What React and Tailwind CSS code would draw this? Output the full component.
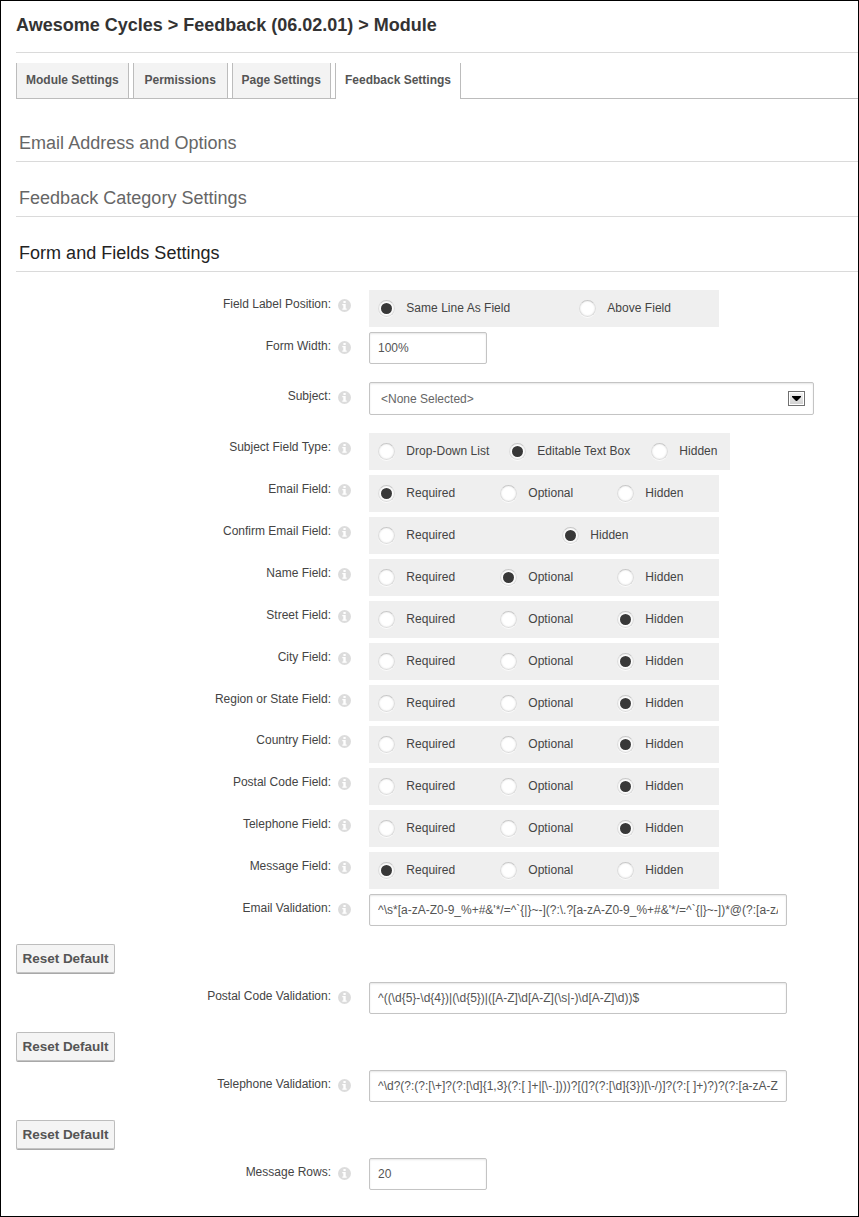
const TABS = [
  { label: 'Module Settings', cls: 'w-[113px] mr-1 pl-[9px]' },
  { label: 'Permissions', cls: 'w-[95px] mr-1 pl-[10.5px]' },
  { label: 'Page Settings', cls: 'w-[99px] mr-1 pl-[8.5px]' },
];

const three = (selected) => [
  { label: 'Required', cls: 'w-[122px]', on: selected === 0 },
  { label: 'Optional', cls: 'w-[117px]', on: selected === 1 },
  { label: 'Hidden', cls: '', on: selected === 2 },
];

const ROWS = [
  {
    label: 'Field Label Position:',
    h: 'h-[42px]',
    options: [
      { label: 'Same Line As Field', cls: 'w-[201px]', on: true },
      { label: 'Above Field', cls: '', on: false },
    ],
  },
  { label: 'Form Width:', h: 'h-[50px]', value: '100%', w: 'w-[118px]' },
  { label: 'Subject:', h: 'h-[51px]', select: '<None Selected>' },
  {
    label: 'Subject Field Type:',
    h: 'h-[42px]',
    panel: 'w-[361px]',
    options: [
      { label: 'Drop-Down List', cls: 'w-[131px]', on: false },
      { label: 'Editable Text Box', cls: 'w-[142px]', on: true },
      { label: 'Hidden', cls: '', on: false },
    ],
  },
  { label: 'Email Field:', h: 'h-[42px]', options: three(0) },
  {
    label: 'Confirm Email Field:',
    h: 'h-[42px]',
    options: [
      { label: 'Required', cls: 'w-[184px]', on: false },
      { label: 'Hidden', cls: '', on: true },
    ],
  },
  { label: 'Name Field:', h: 'h-[42px]', options: three(1) },
  { label: 'Street Field:', h: 'h-[42px]', options: three(2) },
  { label: 'City Field:', h: 'h-[42px]', options: three(2) },
  { label: 'Region or State Field:', h: 'h-[41px]', options: three(2), panelH: 'h-9' },
  { label: 'Country Field:', h: 'h-[42px]', options: three(2) },
  { label: 'Postal Code Field:', h: 'h-[42px]', options: three(2) },
  { label: 'Telephone Field:', h: 'h-[42px]', options: three(2) },
  { label: 'Message Field:', h: 'h-[42px]', options: three(0) },
  {
    label: 'Email Validation:',
    h: 'h-[50px]',
    w: 'w-[418px]',
    value: "^\\s*[a-zA-Z0-9_%+#&'*/=^`{|}~-](?:\\.?[a-zA-Z0-9_%+#&'*/=^`{|}~-])*@(?:[a-zA",
    reset: true,
  },
  {
    label: 'Postal Code Validation:',
    h: 'h-[50px]',
    w: 'w-[418px]',
    value: '^((\\d{5}-\\d{4})|(\\d{5})|([A-Z]\\d[A-Z](\\s|-)\\d[A-Z]\\d))$',
    reset: true,
  },
  {
    label: 'Telephone Validation:',
    h: 'h-[50px]',
    w: 'w-[418px]',
    value: '^\\d?(?:(?:[\\+]?(?:[\\d]{1,3}(?:[ ]+|[\\-.])))?[(]?(?:[\\d]{3})[\\-/)]?(?:[ ]+)?)?(?:[a-zA-Z',
    reset: true,
  },
  { label: 'Message Rows:', h: 'h-[50px]', value: '20', w: 'w-[118px]' },
];

function InfoIcon() {
  return (
    <svg className="ml-[7px] mt-[9px] h-[13px] w-[13px] shrink-0" viewBox="0 0 13 13">
      <circle cx="6.5" cy="6.5" r="6.5" fill="#dcdcdc" />
      <path d="M5.4 2h2.3v2H5.4zM4.3 5h3.4v4.4h1v1.3H4.3V9.4h1V6.3h-1z" fill="#fff" />
    </svg>
  );
}

function Radio({ on }) {
  return (
    <span className="mt-[10px] flex h-[17px] w-[17px] shrink-0 items-center justify-center rounded-full border border-[#dcdcdc] border-t-[#c8c8c8] bg-white shadow-[0_1px_0_#fafafa,inset_0_0_2px_#dedede]">
      {on && <span className="h-[11px] w-[11px] rounded-full bg-[#383838]" />}
    </span>
  );
}

function Options({ row }) {
  return (
    <div className={`flex bg-[#efefef] pl-[9px] ${row.panel || 'w-[350px]'} ${row.panelH || 'h-[37px]'}`}>
      {row.options.map((o) => (
        <div key={o.label} className={`flex shrink-0 ${o.cls}`}>
          <Radio on={o.on} />
          <span className="ml-[11.3px] mt-2.5 whitespace-nowrap leading-4 tracking-[0.03px]">{o.label}</span>
        </div>
      ))}
    </div>
  );
}

function TextBox({ row }) {
  return (
    <div className={`h-8 rounded-[2px] border border-[#c4c4c4] px-2 shadow-[inset_0_1px_2px_#e6e6e6] ${row.w}`}>
      <div className="overflow-hidden whitespace-pre leading-[30px] text-[#555]">{row.value}</div>
    </div>
  );
}

function SelectBox({ value }) {
  return (
    <div className="flex h-[33px] w-[445px] items-center justify-between rounded-[2px] border border-[#c4c4c4] pl-[11px] pr-2 shadow-[inset_0_1px_2px_#e6e6e6]">
      <span className="text-[#666]">{value}</span>
      <span className="flex h-[15px] w-[17px] items-center justify-center border border-[#707070] bg-linear-to-b from-[#f4f4f4] to-[#cfcfcf] shadow-[inset_0_0_0_1px_#fff]">
        <svg className="h-[5px] w-[9px]" viewBox="0 0 9 5">
          <path d="M0 0h9v1L5 5H4L0 1z" fill="#000" />
        </svg>
      </span>
    </div>
  );
}

function Row({ row }) {
  return (
    <>
      <div className={`flex ${row.h}`}>
        <div className="flex w-[335px] shrink-0 justify-end">
          <span className="mt-1.5 whitespace-nowrap leading-4">{row.label}</span>
          <InfoIcon />
        </div>
        <div className="ml-[18px]">
          {row.options && <Options row={row} />}
          {row.value && <TextBox row={row} />}
          {row.select && <SelectBox value={row.select} />}
        </div>
      </div>
      {row.reset && (
        <div className="h-[38px]">
          <button className="flex h-[30px] w-[99px] items-center justify-center whitespace-nowrap rounded-[2px] border border-[#bdbdbd] border-b-[#a8a8a8] bg-[#f4f4f4] text-[13.5px] font-bold tracking-[-0.04px] text-[#555] shadow-[inset_0_-1px_0_#c4c4c4]">
            Reset Default
          </button>
        </div>
      )}
    </>
  );
}

function Section({ title, active }) {
  return (
    <h2
      className={`h-[55px] border-b border-[#dadada] pl-[3px] pt-[25px] text-[18px] leading-[22px] tracking-[0.02px] ${
        active ? 'text-[#222]' : 'text-[#666]'
      }`}
    >
      {title}
    </h2>
  );
}

export default function App() {
  return (
    <div className="h-[1217px] w-[859px] overflow-hidden border border-black bg-white pl-[15px] font-['Liberation_Sans',Arial,sans-serif] text-[12px] text-[#444]">
      <h1 className="h-[52px] border-b border-[#dadada] pt-3 text-[18px] font-bold leading-6 text-[#333]">
        Awesome Cycles &gt; Feedback (06.02.01) &gt; Module
      </h1>
      <nav className="mt-[10px] flex h-9 font-bold leading-[34px] text-[#555]">
        <div className="flex border-b border-[#bcbcbc]">
          {TABS.map((t) => (
            <div key={t.label} className={`whitespace-nowrap border-x border-[#bcbcbc] bg-[#f3f3f3] ${t.cls}`}>
              {t.label}
            </div>
          ))}
        </div>
        <div className="w-[126px] border-x border-[#bcbcbc] text-center">Feedback Settings</div>
        <div className="grow border-b border-[#bcbcbc]" />
      </nav>
      <div className="pt-2">
        <Section title="Email Address and Options" />
        <Section title="Feedback Category Settings" />
        <Section title="Form and Fields Settings" active />
      </div>
      <div className="pt-[18px]">
        {ROWS.map((row) => (
          <Row key={row.label} row={row} />
        ))}
      </div>
    </div>
  );
}
